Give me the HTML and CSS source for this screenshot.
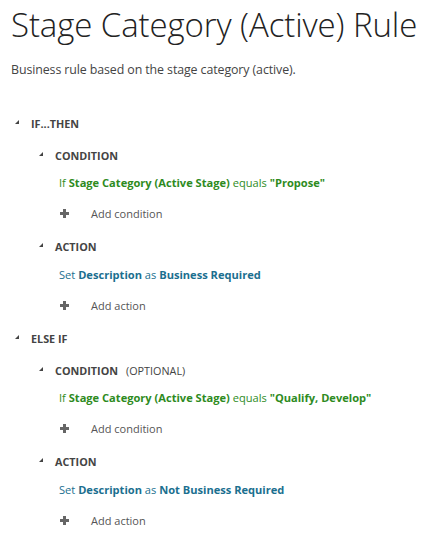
FILE: index.html
```html
<!DOCTYPE html>
<html>
<head>
<meta charset="utf-8">
<link rel="stylesheet" href="styles.css">
</head>
<body>
<div class="page">
  <h1 class="title">Stage Category (Active) Rule</h1>
  <p class="desc">Business rule based on the stage category (active).</p>

  <div class="block">
    <div class="head lvl1"><span class="tri"></span><span class="label">IF...THEN</span></div>
    <div class="head lvl2"><span class="tri"></span><span class="label">CONDITION</span></div>
    <div class="line cond">If <b>Stage Category (Active Stage)</b> equals <b>"Propose"</b></div>
    <div class="add"><span class="plus"></span><span class="addtext">Add condition</span></div>
    <div class="head lvl2 gap"><span class="tri"></span><span class="label">ACTION</span></div>
    <div class="line act">Set <b>Description</b> as <b>Business Required</b></div>
    <div class="add"><span class="plus"></span><span class="addtext">Add action</span></div>

    <div class="head lvl1 gap2"><span class="tri"></span><span class="label">ELSE IF</span></div>
    <div class="head lvl2 tight"><span class="tri"></span><span class="label">CONDITION</span><span class="opt">(OPTIONAL)</span></div>
    <div class="line cond">If <b>Stage Category (Active Stage)</b> equals <b>"Qualify, Develop"</b></div>
    <div class="add"><span class="plus"></span><span class="addtext">Add condition</span></div>
    <div class="head lvl2 gap"><span class="tri"></span><span class="label">ACTION</span></div>
    <div class="line act">Set <b>Description</b> as <b>Not Business Required</b></div>
    <div class="add last"><span class="plus"></span><span class="addtext">Add action</span></div>
  </div>
</div>
</body>
</html>
```
FILE: styles.css
```css
html, body {
  margin: 0;
  padding: 0;
  background: #ffffff;
}
body {
  font-family: "Open Sans", "Noto Sans", sans-serif;
  color: #444444;
}
.page {
  padding: 2px 0 0 11px;
}
.title {
  margin: 0;
  font-weight: 300;
  font-size: 33px;
  line-height: 46px;
  color: #222222;
  letter-spacing: -0.1px;
  white-space: nowrap;
}
.desc {
  margin: 15px 0 0 0;
  font-size: 12.4px;
  line-height: 14px;
  color: #444444;
  letter-spacing: -0.1px;
}
.block {
  margin-top: 39px;
  display: flex;
  flex-direction: column;
}
.head {
  display: flex;
  align-items: center;
  height: 14px;
  font-size: 10.8px;
  font-weight: 700;
  color: #444444;
}
.gap { margin-top: 19px; }
.lvl1 { padding-left: 4px; }
.lvl1.gap2 { margin-top: 19px; }
.lvl2 { padding-left: 28px; margin-top: 18px; }
.lvl2.gap { margin-top: 19px; }
.lvl2.tight { margin-top: 18px; }
.tri {
  width: 0;
  height: 0;
  border-left: 4px solid transparent;
  border-bottom: 4px solid #444444;
  margin-right: 12px;
  margin-top: -3px;
}
.opt {
  font-weight: 400;
  margin-left: 8px;
}
.line {
  padding-left: 48px;
  margin-top: 14px;
  height: 14px;
  line-height: 14px;
  font-size: 11.1px;
  white-space: nowrap;
}
.act.line { margin-top: 15px; }
.line b { font-weight: 700; }
.cond { color: #2e8b1e; }
.act { color: #1b6f8f; }
.add {
  display: flex;
  align-items: center;
  padding-left: 49px;
  margin-top: 16px;
  height: 14px;
}
.line.act + .add { margin-top: 16px; }
.add.last { margin-top: 16px; }
.plus {
  position: relative;
  width: 9px;
  height: 9px;
  margin-right: 22px;
}
.plus::before, .plus::after {
  content: "";
  position: absolute;
  background: #666666;
}
.plus::before { left: 0; top: 3px; width: 9px; height: 3px; }
.plus::after { left: 3px; top: 0; width: 3px; height: 9px; }
.addtext {
  font-size: 11px;
  color: #555555;
}
```
